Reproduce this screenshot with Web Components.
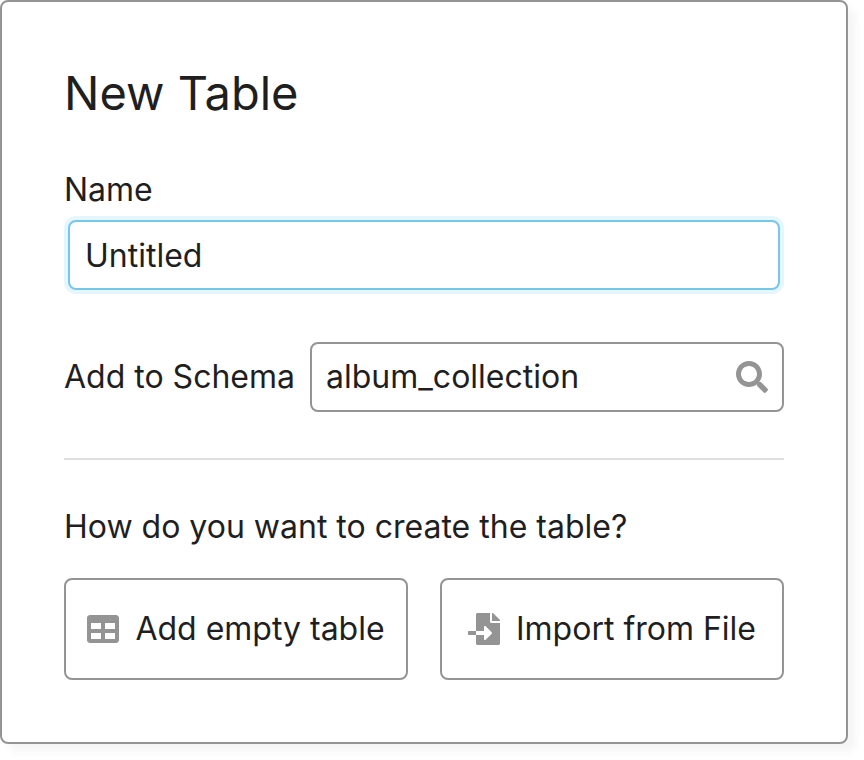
<!DOCTYPE html>
<html lang="en"><head><meta charset="utf-8"><title>New Table</title>
<style>
*{box-sizing:border-box}
body{margin:0;background:#fff;color:#1f1f1f;font:32px/40px Inter,"Liberation Sans",sans-serif}
</style></head><body>
<new-table-dialog></new-table-dialog>
<script>
const base = '*{box-sizing:border-box}button,input{font:inherit;color:inherit;margin:0}svg{display:block;flex:none}';
const define = (name, css, html) => customElements.define(name, class extends HTMLElement {
  constructor(){
    super();
    this.attachShadow({mode:'open'}).innerHTML = `<style>${base}${css}</style>${html}`;
  }
});
define('name-field', `
:host{display:block}
label{display:block}
input{display:block;width:calc(100% - 8px);height:70px;margin:10px 4px 0;padding:0 15px;border:2px solid #76c7ec;border-radius:8px;background:#fff;outline:0;box-shadow:0 0 0 4px #e6f6fe}
`, `<label for="name">Name</label><input id="name" value="Untitled">`);
define('schema-field', `
:host{display:flex;align-items:center;gap:15px}
label{white-space:nowrap}
.box{display:flex;align-items:center;flex:1;min-width:0;height:70px;padding:0 14px;border:2px solid #949494;border-radius:8px}
input{flex:1;min-width:0;border:0;padding:0;background:none;outline:0}
`, `<label for="schema">Add to Schema</label><div class="box"><input id="schema" value="album_collection">
<svg width="32" height="32" viewBox="0 0 512 512" fill="#949494" aria-hidden="true"><path d="M505 442.700 405.300 343c-4.500-4.500-10.600-7-17-7H372c27.600-35.300 44-79.700 44-128C416 93.100 322.900 0 208 0S0 93.100 0 208s93.100 208 208 208c48.300 0 92.700-16.400 128-44v16.300c0 6.400 2.500 12.500 7 17l99.700 99.700c9.400 9.400 24.600 9.400 33.900 0l28.300-28.300c9.400-9.400 9.400-24.600.1-34zM208 336c-70.700 0-128-57.200-128-128 0-70.700 57.200-128 128-128 70.700 0 128 57.200 128 128 0 70.700-57.200 128-128 128z"/></svg></div>`);
define('choice-button', `
:host{display:block;flex:1}
button{display:flex;align-items:center;justify-content:center;gap:16px;width:100%;height:102px;padding:0;border:2px solid #949494;border-radius:8px;background:#fff;white-space:nowrap;cursor:pointer}
`, `<button type="button"><slot name="icon"></slot><span><slot></slot></span></button>`);
define('new-table-dialog', `
:host{display:block;margin:0 16px 16px 0;padding:62px;border:2px solid #949494;border-radius:8px;background:#fff;box-shadow:8px 8px 8px #0000000a}
h1{margin:0;font-size:47px;line-height:58px;font-weight:400}
name-field{margin-top:48px}
schema-field{margin-top:52px}
hr{height:2px;margin:46px 0 0;border:0;background:#dedede}
p{margin:47px 0 0}
.choices{display:flex;gap:32px;margin-top:31px}
`, `<h1>New Table</h1><name-field></name-field><schema-field></schema-field><hr>
<p>How do you want to create the table?</p>
<div class="choices">
<choice-button><svg slot="icon" width="32" height="32" viewBox="0 0 512 512" fill="#949494" aria-hidden="true"><path d="M464 32H48C21.500 32 0 53.500 0 80v352c0 26.500 21.500 48 48 48h416c26.500 0 48-21.500 48-48V80c0-26.500-21.500-48-48-48zM224 416H64v-96h160v96zm0-160H64v-96h160v96zm224 160H288v-96h160v96zm0-160H288v-96h160v96z"/></svg>Add empty table</choice-button>
<choice-button><svg slot="icon" width="32" height="32" viewBox="0 0 512 512" fill="#949494" aria-hidden="true"><path d="M16 288c-8.800 0-16 7.200-16 16v32c0 8.800 7.200 16 16 16h112v-64zm489-183L407.100 7c-4.500-4.500-10.600-7-17-7H384v128h128v-6.100c0-6.300-2.500-12.400-7-16.900zm-153 31V0H152c-13.300 0-24 10.700-24 24v264h128v-65.200c0-14.300 17.300-21.400 27.400-11.300L379 308c6.600 6.700 6.600 17.400 0 24l-95.700 96.400c-10.100 10.100-27.400 3-27.400-11.300V352H128v136c0 13.300 10.700 24 24 24h336c13.300 0 24-10.700 24-24V160H376c-13.200 0-24-10.800-24-24z"/></svg>Import from File</choice-button>
</div>`);
</script></body></html>
